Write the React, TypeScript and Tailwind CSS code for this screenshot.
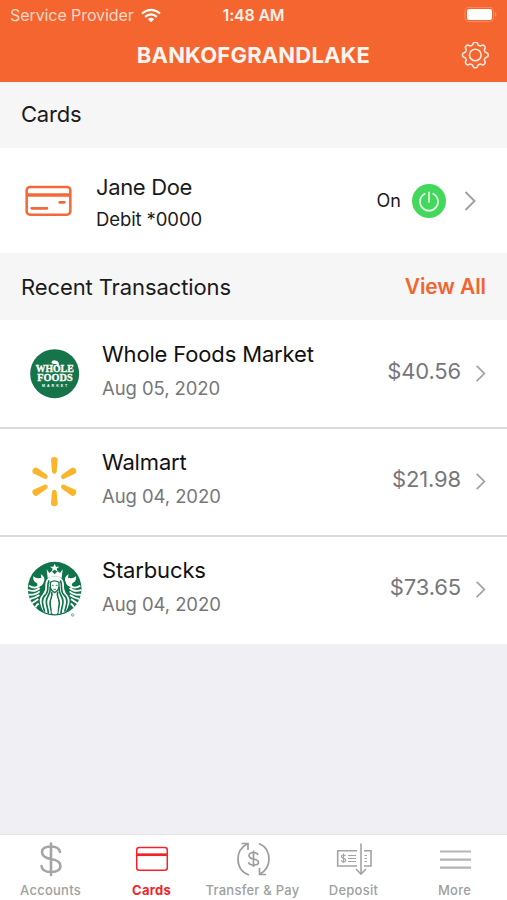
import type { ReactNode } from "react";

const gearPath = (() => {
  const points: string[] = [];
  for (let i = 0; i < 144; i++) {
    const a = (i / 144) * Math.PI * 2;
    const r = 11.5 + 1.35 * Math.tanh(1.8 * Math.cos(8 * a));
    points.push(`${(14.3 + r * Math.sin(a)).toFixed(2)} ${(13 - r * Math.cos(a)).toFixed(2)}`);
  }
  return `M${points.join("L")}Z`;
})();

function GearIcon() {
  return (
    <svg className="h-7 w-7" viewBox="0 0 28 28" fill="none" stroke="#ffe9df" strokeWidth="1.6" strokeLinejoin="round">
      <path d={gearPath} />
      <circle cx="14.3" cy="13" r="5.8" />
    </svg>
  );
}

function WifiIcon() {
  return (
    <svg className="h-[15px] w-5" viewBox="0 0 60 45" fill="#fff">
      <path d="M30 43 20.500 33.500Q30 25.500 39.500 33.500Z" />
      <path d="M12.500 26.500Q30 11.500 47.500 26.500M3 16.500Q30-5.500 57 16.500" fill="none" stroke="#fff" strokeWidth="6.500" />
    </svg>
  );
}

function BatteryIcon() {
  return (
    <svg className="h-4 w-[33px]" viewBox="0 0 99 48">
      <rect x="3" y="1" width="86" height="43" rx="12" fill="none" stroke="#f78f66" strokeWidth="3" />
      <rect x="9" y="6" width="75" height="33" rx="7" fill="#fff" />
      <path d="M93 15q8 8 0 15z" fill="#f9a584" />
    </svg>
  );
}

function DebitCardIcon() {
  return (
    <svg className="h-[31px] w-[47px]" viewBox="0 0 141 93" fill="none" stroke="#f4683a">
      <rect x="5" y="6" width="131" height="83" rx="10" strokeWidth="7.500" />
      <path d="M5 30H135" strokeWidth="11" />
      <path d="M20 70H66M104 52H118" strokeWidth="8" strokeLinecap="round" />
    </svg>
  );
}

function Chevron({ large = false }: { large?: boolean }) {
  return (
    <svg className={large ? "h-5 w-3" : "h-[17px] w-[11px]"} viewBox="0 0 12 20" fill="none" stroke="#a0a0a2" strokeWidth="2">
      <path d="M1.500 1 10.500 10 1.500 19" />
    </svg>
  );
}

function PowerIcon() {
  return (
    <svg className="h-[34px] w-[34px]" viewBox="0 0 34 34" fill="none" stroke="#e4fde8" strokeWidth="1.700" strokeLinecap="round">
      <circle cx="17" cy="17" r="17" fill="#41d85b" stroke="none" />
      <path d="M17 8.300V18M12.800 9.700A9 9 0 1 0 21.200 9.700" />
    </svg>
  );
}

function WholeFoodsLogo() {
  return (
    <svg className="h-[70px] w-[70px]" viewBox="0 0 210 210" fill="#fff" textAnchor="middle">
      <circle cx="104" cy="101" r="73.500" fill="#16744b" />
      <g fontFamily="'Liberation Serif', serif" fontWeight="700" stroke="#fff" strokeWidth="1">
        <text x="104" y="95" fontSize="31" textLength="114" lengthAdjust="spacingAndGlyphs">WHOLE</text>
        <text x="105" y="123" fontSize="33" textLength="106" lengthAdjust="spacingAndGlyphs">FOODS</text>
      </g>
      <text x="104" y="141" fontSize="11" fontFamily="'Liberation Sans', sans-serif" fontWeight="700" textLength="76">MARKET</text>
      <path d="M94 68Q96 58 109 62Q117 64 117 75Q110 71 104 72Q98 72 94 68Z" />
      <path d="M108 70Q116 72 113 81" fill="none" stroke="#fff" strokeWidth="4" />
    </svg>
  );
}

function WalmartLogo() {
  return (
    <svg className="h-[70px] w-[70px]" viewBox="0 5 210 210" fill="#fbb52b">
      {[0, 60, 120, 180, 240, 300].map((angle) => (
        <path key={angle} transform={`rotate(${angle} 103 106)`} d="M93 41Q93 32 103 32Q113 32 113 41L110 76Q109 82 103 82Q97 82 96 76Z" />
      ))}
      <circle cx="124" cy="177" r="2" fill="#fde1a5" />
    </svg>
  );
}

function StarbucksLogo() {
  return (
    <svg className="h-[70px] w-[70px]" viewBox="-1 5 210 210" fill="#fff">
      <circle cx="103" cy="103" r="80.500" fill="#10744b" />
      <path d="M103 28 107 37H117L109 43 112 52 103 46 94 52 97 43 89 37H99Z" />
      <path d="M79 45 87 56 94 51 103 60 112 51 119 56 127 45 124 71Q103 60 82 71Z" />
      <path d="M103 66C78 66 74 83 75 99C75 119 54 126 59 146C62 156 63 162 70 172C95 183 119 181 136 172C143 162 144 156 147 146C152 126 131 119 131 99C132 83 128 66 103 66Z" />
      <path d="M90 84Q103 75 116 84V100Q112 111 103 115Q94 111 90 100Z" fill="#fff" stroke="#10744b" strokeWidth="4" />
      <g fill="none" stroke="#10744b" strokeWidth="5">
        <path d="M86 78C78 94 88 109 76 121C62 133 65 146 73 172M89 98C94 116 78 125 78 142C78 154 84 164 84 178" />
        <path d="M120 78C128 94 118 109 130 121C144 133 141 146 133 172M117 98C112 116 128 125 128 142C128 154 122 164 122 178" />
        <path d="M94 112C99 129 88 134 89 148C90 160 94 168 94 180M112 112C107 129 118 134 117 148C116 160 112 168 112 180" />
      </g>
      <path d="M94 93H100M106 93H112M99 105H107" fill="none" stroke="#10744b" strokeWidth="2.500" />
      <path d="M97 124Q103 120 109 124L113 140Q111 151 112 177H94Q95 151 93 140Z" />
      {[false, true].map((flip) => (
        <g key={String(flip)} transform={flip ? "translate(206 0) scale(-1 1)" : undefined}>
          <path d="M39 66Q51 75 60 70Q72 76 64 92L50 95Q54 86 44 83Q37 77 39 66Z" />
          <path d="M58 82Q66 73 61 59Q77 68 70 83Q68 94 53 99Z" />
          <path d="M26 94Q45 107 61 91M23 107Q45 114 58 101M24 121Q46 123 58 111M29 134Q45 131 57 122M35 147Q46 140 54 134M45 159Q49 151 55 148" fill="none" stroke="#fff" strokeWidth="5.500" />
        </g>
      ))}
      <circle cx="157" cy="182" r="4" fill="none" stroke="#579b7d" strokeWidth="2" />
      <circle cx="157" cy="182" r="1.500" fill="#579b7d" />
    </svg>
  );
}

function DollarIcon() {
  return (
    <svg className="h-9 w-9" viewBox="0 0 36 36" fill="none" stroke="#a5a5a5" strokeWidth="2.600" strokeLinecap="round">
      <path d="M18 2.500V34M27 11Q26 5.500 18 5.500Q9 5.500 9 11Q9 16.500 18 18Q27.500 19.500 27.500 25Q27.500 31 18 31Q9 31 8.500 25" />
    </svg>
  );
}

function CardsTabIcon() {
  return (
    <svg className="h-9 w-9" viewBox="0 0 36 36" fill="none" stroke="#f32429">
      <rect x="2.700" y="6.500" width="30.600" height="22.700" rx="2.500" strokeWidth="1.500" />
      <path d="M3 13.700H33" strokeWidth="2.700" />
    </svg>
  );
}

function TransferIcon() {
  return (
    <svg className="h-9 w-9" viewBox="0 0 36 36" fill="none" stroke="#9d9d9d" strokeWidth="1.700">
      <path d="M14 34Q3 30 3 18Q3 8 12 3M6.500 2.500H13V9M24 2.500Q34 7 34 18Q34 28 25 33M24.500 27V33.500H31" />
      <path d="M18.500 9.500V26M23 14Q22 11.500 18.500 11.500Q14 11.500 14 14.500Q14 17 18.500 18Q23.500 19 23.500 21.500Q23.500 24 18.500 24Q14 24 13.500 21.200" />
    </svg>
  );
}

function DepositIcon() {
  return (
    <svg className="h-9 w-9" viewBox="0 0 36 36" fill="none" stroke="#a3a3a3" strokeWidth="1.600">
      <path d="M21 9.700H1.700V25H21M28 9.700H35V25H28M25 2.500V33M20 28L25 33L30 28" />
      <path d="M12 14.500H20M12 17.500H20M12 20.500H20M28.500 14.500H31M28.500 17.500H31M28.500 20.500H31" strokeWidth="1.200" />
      <path d="M7.500 12.500V22M9.500 15Q9 14 7.500 14Q5.500 14 5.500 15.500Q5.500 16.800 7.500 17.300Q9.800 17.800 9.800 19.200Q9.800 20.700 7.500 20.700Q5.500 20.700 5.200 19.400" strokeWidth="1.200" />
    </svg>
  );
}

function MenuIcon() {
  return (
    <svg className="h-9 w-9" viewBox="0 0 36 36" stroke="#b5b5b5" strokeWidth="2.200">
      <path d="M3 10.500H34M3 18.700H34M3 26.700H34" />
    </svg>
  );
}

function Transaction({ name, date, amount, logo }: { name: string; date: string; amount: string; logo: ReactNode }) {
  return (
    <li className="flex h-[108px] items-start border-y border-[#dcdcdd] bg-white pl-5 first:border-t-white last:border-b-white">
      <div className="mt-[19px] h-[70px] w-[70px] shrink-0">{logo}</div>
      <div className="ml-3 flex-1 pt-[18px]">
        <p className="text-[22px] leading-[30px] tracking-[-0.15px] text-[#111]">{name}</p>
        <p className="mt-[5px] text-[18.5px] leading-7 tracking-[-0.08px] text-[#77777b]">{date}</p>
      </div>
      <p className="mt-[35px] text-[22px] leading-[30px] tracking-[-0.15px] text-[#77777b]">{amount}</p>
      <span className="mt-11 mr-[21px] ml-[14px]"><Chevron /></span>
    </li>
  );
}

function Tab({ label, icon, active = false }: { label: string; icon: ReactNode; active?: boolean }) {
  return (
    <li className={`flex w-[101px] flex-col items-center pt-[6px] ${active ? "font-bold text-[#f32429]" : "font-medium text-[#a0a0a0]"}`}>
      {icon}
      <span className="mt-[3px] text-[13px] leading-5 tracking-[0.25px] whitespace-nowrap">{label}</span>
    </li>
  );
}

export default function App() {
  return (
    <div className="flex h-[900px] w-[507px] flex-col overflow-hidden bg-[#efeff4] font-['Inter',sans-serif]">
      <header className="h-[82px] bg-[#f4652f]">
        <div className="grid h-[30px] grid-cols-3 items-center px-2.5 text-[16px] text-[#fff0e9]">
          <div className="flex items-center gap-[7px] tracking-[-0.08px] whitespace-nowrap text-[#ffd9c9]">Service Provider<WifiIcon /></div>
          <p className="text-center font-semibold tracking-[-0.2px]">1:48 AM</p>
          <div className="flex justify-end"><BatteryIcon /></div>
        </div>
        <div className="grid h-[51px] grid-cols-[28px_1fr_28px] items-center px-[18px]">
          <h1 className="col-start-2 text-center text-[22px] font-bold tracking-[0.18px] text-[#fff5f0]">BANKOFGRANDLAKE</h1>
          <GearIcon />
        </div>
      </header>
      <h2 className="flex h-[66px] items-center bg-[#f6f6f6] pb-px pl-[21px] text-[22px] tracking-[-0.2px] text-[#1b1b1c]">Cards</h2>
      <section className="flex h-[105px] items-center bg-white pr-[31px] pl-[25px]">
        <DebitCardIcon />
        <div className="ml-6 flex-1 pt-[5px]">
          <p className="text-[22px] leading-[30px] tracking-[-0.35px] text-[#1b1b1c]">Jane Doe</p>
          <p className="mt-0.5 text-[18.5px] leading-[30px] tracking-[-0.1px] text-[#1b1b1c]">Debit *0000</p>
        </div>
        <span className="mr-[11px] text-[18px] text-[#1b1b1c]">On</span>
        <PowerIcon />
        <span className="ml-[18px]"><Chevron large /></span>
      </section>
      <div className="flex h-[67px] items-center justify-between bg-[#f6f6f6] px-[21px] pt-px text-[22px]">
        <h2 className="tracking-[-0.1px] text-[#1b1b1c]">Recent Transactions</h2>
        <span className="text-[21px] font-semibold tracking-[-0.1px] text-[#f26531]">View All</span>
      </div>
      <ul>
        <Transaction name="Whole Foods Market" date="Aug 05, 2020" amount="$40.56" logo={<WholeFoodsLogo />} />
        <Transaction name="Walmart" date="Aug 04, 2020" amount="$21.98" logo={<WalmartLogo />} />
        <Transaction name="Starbucks" date="Aug 04, 2020" amount="$73.65" logo={<StarbucksLogo />} />
      </ul>
      <nav className="mt-auto h-[66px] border-t border-[#e4e4e7] bg-white">
        <ul className="flex">
          <Tab label="Accounts" icon={<DollarIcon />} />
          <Tab label="Cards" icon={<CardsTabIcon />} active />
          <Tab label="Transfer & Pay" icon={<TransferIcon />} />
          <Tab label="Deposit" icon={<DepositIcon />} />
          <Tab label="More" icon={<MenuIcon />} />
        </ul>
      </nav>
    </div>
  );
}
